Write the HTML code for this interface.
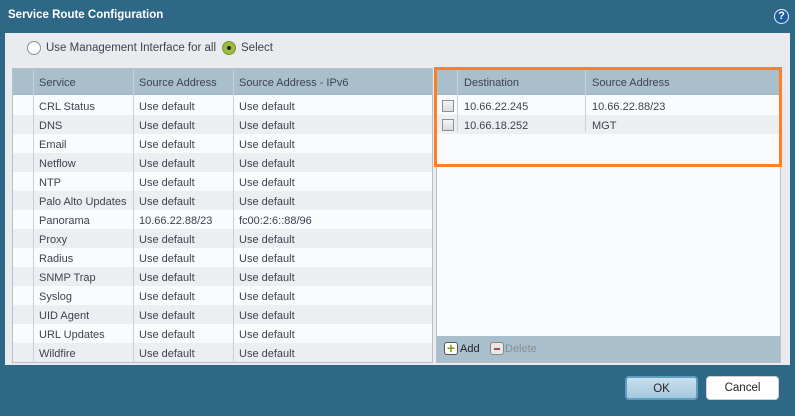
<!DOCTYPE html>
<html><head><style>
*{box-sizing:border-box;margin:0;padding:0}
body{width:795px;height:416px;background:#2f6886;font-family:"Liberation Sans",sans-serif;font-size:11px;color:#3c4350;position:relative;overflow:hidden}
.title{position:absolute;left:8px;top:9px;color:#fff;font-weight:bold;font-size:11.5px}
.help{position:absolute;left:774px;top:9px;width:15px;height:15px;border-radius:50%;background:#1f5e9a;border:1.5px solid #e8f0f8;color:#fff;font-weight:bold;font-size:11px;text-align:center;line-height:12px}
.body{position:absolute;left:5px;top:33px;width:785px;height:332px;background:#e9ebee}
.radio{position:absolute;top:41px;width:14px;height:14px;border-radius:50%;border:1px solid #8a8f96;background:#fff}
.lbl{position:absolute;top:42px;font-size:11.5px}
.grid{position:absolute;background:#fafbfc;border:1px solid #b8c0c8}
.hdr{position:absolute;left:0;top:0;right:0;height:26px;background:#aabfcc;border-bottom:1px solid #9fb3c0}
.c{position:absolute;white-space:nowrap}
.vl{position:absolute;top:0;bottom:0;width:1px;background:#c8d0d8}
.row{position:absolute;left:0;right:0;height:19px}
.alt{background:#eceef1}
.cb{position:absolute;left:5px;width:12px;height:12px;border:1px solid #8a8f96;background:linear-gradient(#f4f4f4,#dcdcdc)}
.btn{position:absolute;top:376px;height:24px;border-radius:4px;text-align:center;line-height:22px;color:#222;font-size:11.5px}
</style></head><body>
<div class="title">Service Route Configuration</div>
<div class="help">?</div>
<div class="body"></div>
<div class="radio" style="left:27px"></div>
<div class="lbl" style="left:46px">Use Management Interface for all</div>
<div class="radio" style="left:222px;background:#9dbb3a;border-color:#7a9630"><div style="position:absolute;left:4px;top:4px;width:4px;height:4px;border-radius:50%;background:#222"></div></div>
<div class="lbl" style="left:241px">Select</div>

<div class="grid" style="left:12px;top:68px;width:421px;height:295px">
<div class="hdr"></div>
<div class="row alt" style="top:46px"></div><div class="row alt" style="top:84px"></div><div class="row alt" style="top:122px"></div><div class="row alt" style="top:160px"></div><div class="row alt" style="top:198px"></div><div class="row alt" style="top:236px"></div><div class="row alt" style="top:274px"></div>
<div class="vl" style="left:20px"></div><div class="vl" style="left:120px"></div><div class="vl" style="left:220px"></div>
<div class="c" style="left:26px;top:8px">Service</div><div class="c" style="left:126px;top:8px">Source Address</div><div class="c" style="left:226px;top:8px">Source Address - IPv6</div>
<div style="position:absolute;left:26px;top:29px;line-height:19px">CRL Status<br>DNS<br>Email<br>Netflow<br>NTP<br>Palo Alto Updates<br>Panorama<br>Proxy<br>Radius<br>SNMP Trap<br>Syslog<br>UID Agent<br>URL Updates<br>Wildfire</div>
<div style="position:absolute;left:126px;top:29px;line-height:19px">Use default<br>Use default<br>Use default<br>Use default<br>Use default<br>Use default<br>10.66.22.88/23<br>Use default<br>Use default<br>Use default<br>Use default<br>Use default<br>Use default<br>Use default</div>
<div style="position:absolute;left:226px;top:29px;line-height:19px">Use default<br>Use default<br>Use default<br>Use default<br>Use default<br>Use default<br>fc00:2:6::88/96<br>Use default<br>Use default<br>Use default<br>Use default<br>Use default<br>Use default<br>Use default</div>
</div>

<div class="grid" style="left:436px;top:68px;width:345px;height:295px">
<div class="hdr"></div>
<div class="row alt" style="top:46px"></div>
<div class="vl" style="left:20px;bottom:230px"></div><div class="vl" style="left:148px;bottom:230px"></div>
<div class="c" style="left:27px;top:8px">Destination</div><div class="c" style="left:155px;top:8px">Source Address</div>
<div class="cb" style="top:31px"></div><div class="cb" style="top:50px"></div>
<div class="c" style="left:27px;top:29px;line-height:19px">10.66.22.245<br>10.66.18.252</div>
<div class="c" style="left:155px;top:29px;line-height:19px">10.66.22.88/23<br>MGT</div>
<div style="position:absolute;left:0;right:0;bottom:0;height:26px;background:#aabfcc">
<div style="position:absolute;left:7px;top:6px;width:14px;height:13px;border:1px solid #555;border-radius:3px;background:#fff;color:#7a9a20;font-weight:bold;font-size:14px;line-height:10px;text-align:center">+</div>
<div class="c" style="left:23px;top:7px;color:#222">Add</div>
<div style="position:absolute;left:53px;top:6px;width:14px;height:13px;border:1px solid #888;border-radius:3px;background:#e8e8e8"><div style="position:absolute;left:3px;top:5px;width:6px;height:2px;background:#a05050"></div></div>
<div class="c" style="left:68px;top:7px;color:#8a8f96">Delete</div>
</div>
</div>
<div style="position:absolute;left:434px;top:67px;width:348px;height:100px;border:3px solid #ff7f27"></div>

<div class="btn" style="left:625px;width:73px;background:linear-gradient(#c8e0ee,#a6c8dc);border:2px solid #5f9ec0">OK</div>
<div class="btn" style="left:706px;width:73px;background:#fff;border:1px solid #d0d0d0">Cancel</div>
</body></html>
